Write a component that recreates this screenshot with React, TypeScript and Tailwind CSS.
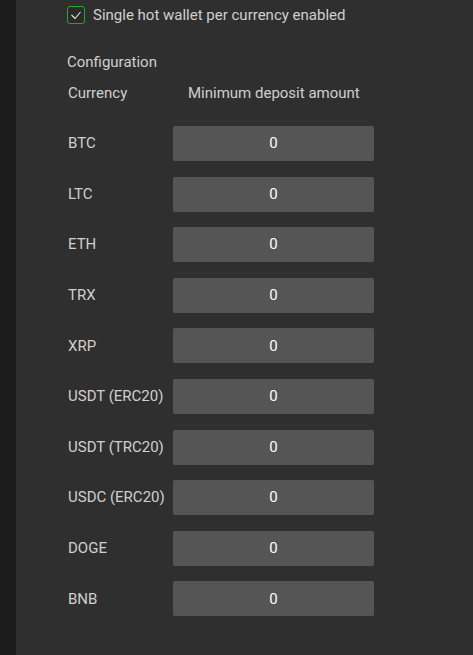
const currencies = [
  "BTC",
  "LTC",
  "ETH",
  "TRX",
  "XRP",
  "USDT (ERC20)",
  "USDT (TRC20)",
  "USDC (ERC20)",
  "DOGE",
  "BNB",
];

export default function App() {
  return (
    <div className="flex h-[655px] w-[473px] overflow-hidden bg-[#2f2f2f] font-['Roboto',sans-serif]">
      <div className="w-[16px] shrink-0 bg-[#1b1b1b]" />
      <div className="flex flex-1 flex-col pl-[51px] pt-[6px]">
        <label className="flex items-center gap-[8px]">
          <span className="flex h-[18px] w-[18px] items-center justify-center rounded-[3px] border border-[#22a822] bg-[#2a2a2a]">
            <svg width="12" height="10" viewBox="0 0 12 10" fill="none">
              <path d="M1.5 5l3.5 3.5L10.5 2" stroke="#e8e8e8" strokeWidth="1.1" />
            </svg>
          </span>
          <span className="text-[15px] leading-[18px] text-[#cfcfcf]">
            Single hot wallet per currency enabled
          </span>
        </label>

        <div className="mt-[28px] text-[15px] leading-[20px] text-[#cfcfcf]">Configuration</div>
        <div className="mt-[11px] flex text-[15px] leading-[20px] text-[#cfcfcf]">
          <span className="w-[121px] pl-[1px]">Currency</span>
          <span>Minimum deposit amount</span>
        </div>

        <div className="mt-[23px] flex flex-col gap-[15.6px]">
          {currencies.map((c) => (
            <div key={c} className="flex h-[35px] items-center">
              <span className="w-[106px] pl-[1px] text-[15px] text-[#cfcfcf]">{c}</span>
              <div className="flex h-[35px] w-[201px] items-center justify-center rounded-[2px] bg-[#555555] text-[15px] text-white">
                0
              </div>
            </div>
          ))}
        </div>
      </div>
    </div>
  );
}
